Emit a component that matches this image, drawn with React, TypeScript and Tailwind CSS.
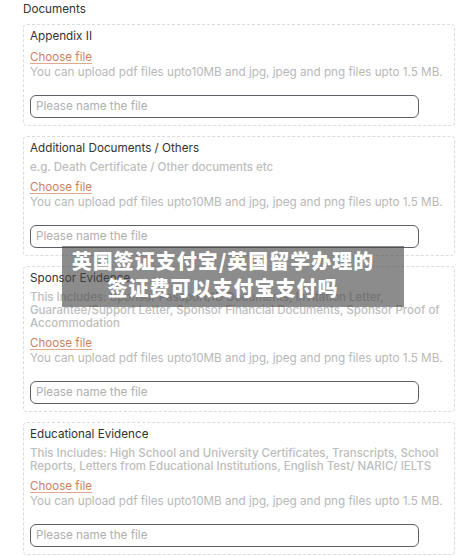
import React from "react";

const HELP = "You can upload pdf files upto10MB and jpg, jpeg and png files upto 1.5 MB.";

function Card({ title, desc }: { title: string; desc?: string }) {
  return (
    <div className="rounded-[4px] border border-dashed border-[#dcdcdc] px-[6px] pt-[2px] pb-[7px]">
      <div className="text-[11.7px] leading-[18px] text-[#333]">{title}</div>
      {desc && (
        <div className="mt-[4.5px] text-[11.5px] leading-[12.8px] font-medium text-[#bdbdbd]">{desc}</div>
      )}
      <div className={`${desc ? "mt-[6.5px]" : "mt-[5px]"} text-[11.6px] leading-[15px] text-[#cf7f5f] underline decoration-[#e0a890] underline-offset-2`}>
        Choose file
      </div>
      <div className="text-[11.7px] leading-[15px] text-[#b8b8b8]">{HELP}</div>
      <input
        className="mt-[14.5px] block h-[23px] w-[389px] rounded-[6px] border border-[#5c6066] px-[5px] text-[11.7px] text-[#333] placeholder:text-[#b0b0b0] outline-none"
        placeholder="Please name the file"
      />
    </div>
  );
}

export default function App() {
  return (
    <div className="relative min-h-[556px] w-[468px] overflow-hidden bg-white pl-[23px] pr-[13px]" style={{ fontFamily: "Inter, 'Noto Sans', sans-serif" }}>
      <div className="pt-[1px] text-[11.7px] leading-[17px] text-[#333]">Documents</div>
      <div className="mt-[6px] flex flex-col gap-[10px]">
        <Card title="Appendix II" />
        <Card title="Additional Documents / Others" desc="e.g. Death Certificate / Other documents etc" />
        <Card
          title="Sponsor Evidence"
          desc="This Includes: Sponsor Passport/ID Documents, Invitation Letter, Guarantee/Support Letter, Sponsor Financial Documents, Sponsor Proof of Accommodation"
        />
        <Card
          title="Educational Evidence"
          desc="This Includes: High School and University Certificates, Transcripts, School Reports, Letters from Educational Institutions, English Test/ NARIC/ IELTS"
        />
      </div>
      <div
        className="absolute left-[62px] top-[246px] flex h-[61px] w-[342px] flex-col items-center justify-center bg-[rgba(70,70,70,0.62)] pr-[20px] pb-[4px] text-[20px] font-black leading-[26.5px] tracking-[1px] text-white"
        style={{ fontFamily: "'Noto Sans CJK SC', sans-serif" }}
      >
        <div>英国签证支付宝/英国留学办理的</div>
        <div>签证费可以支付宝支付吗</div>
      </div>
    </div>
  );
}
